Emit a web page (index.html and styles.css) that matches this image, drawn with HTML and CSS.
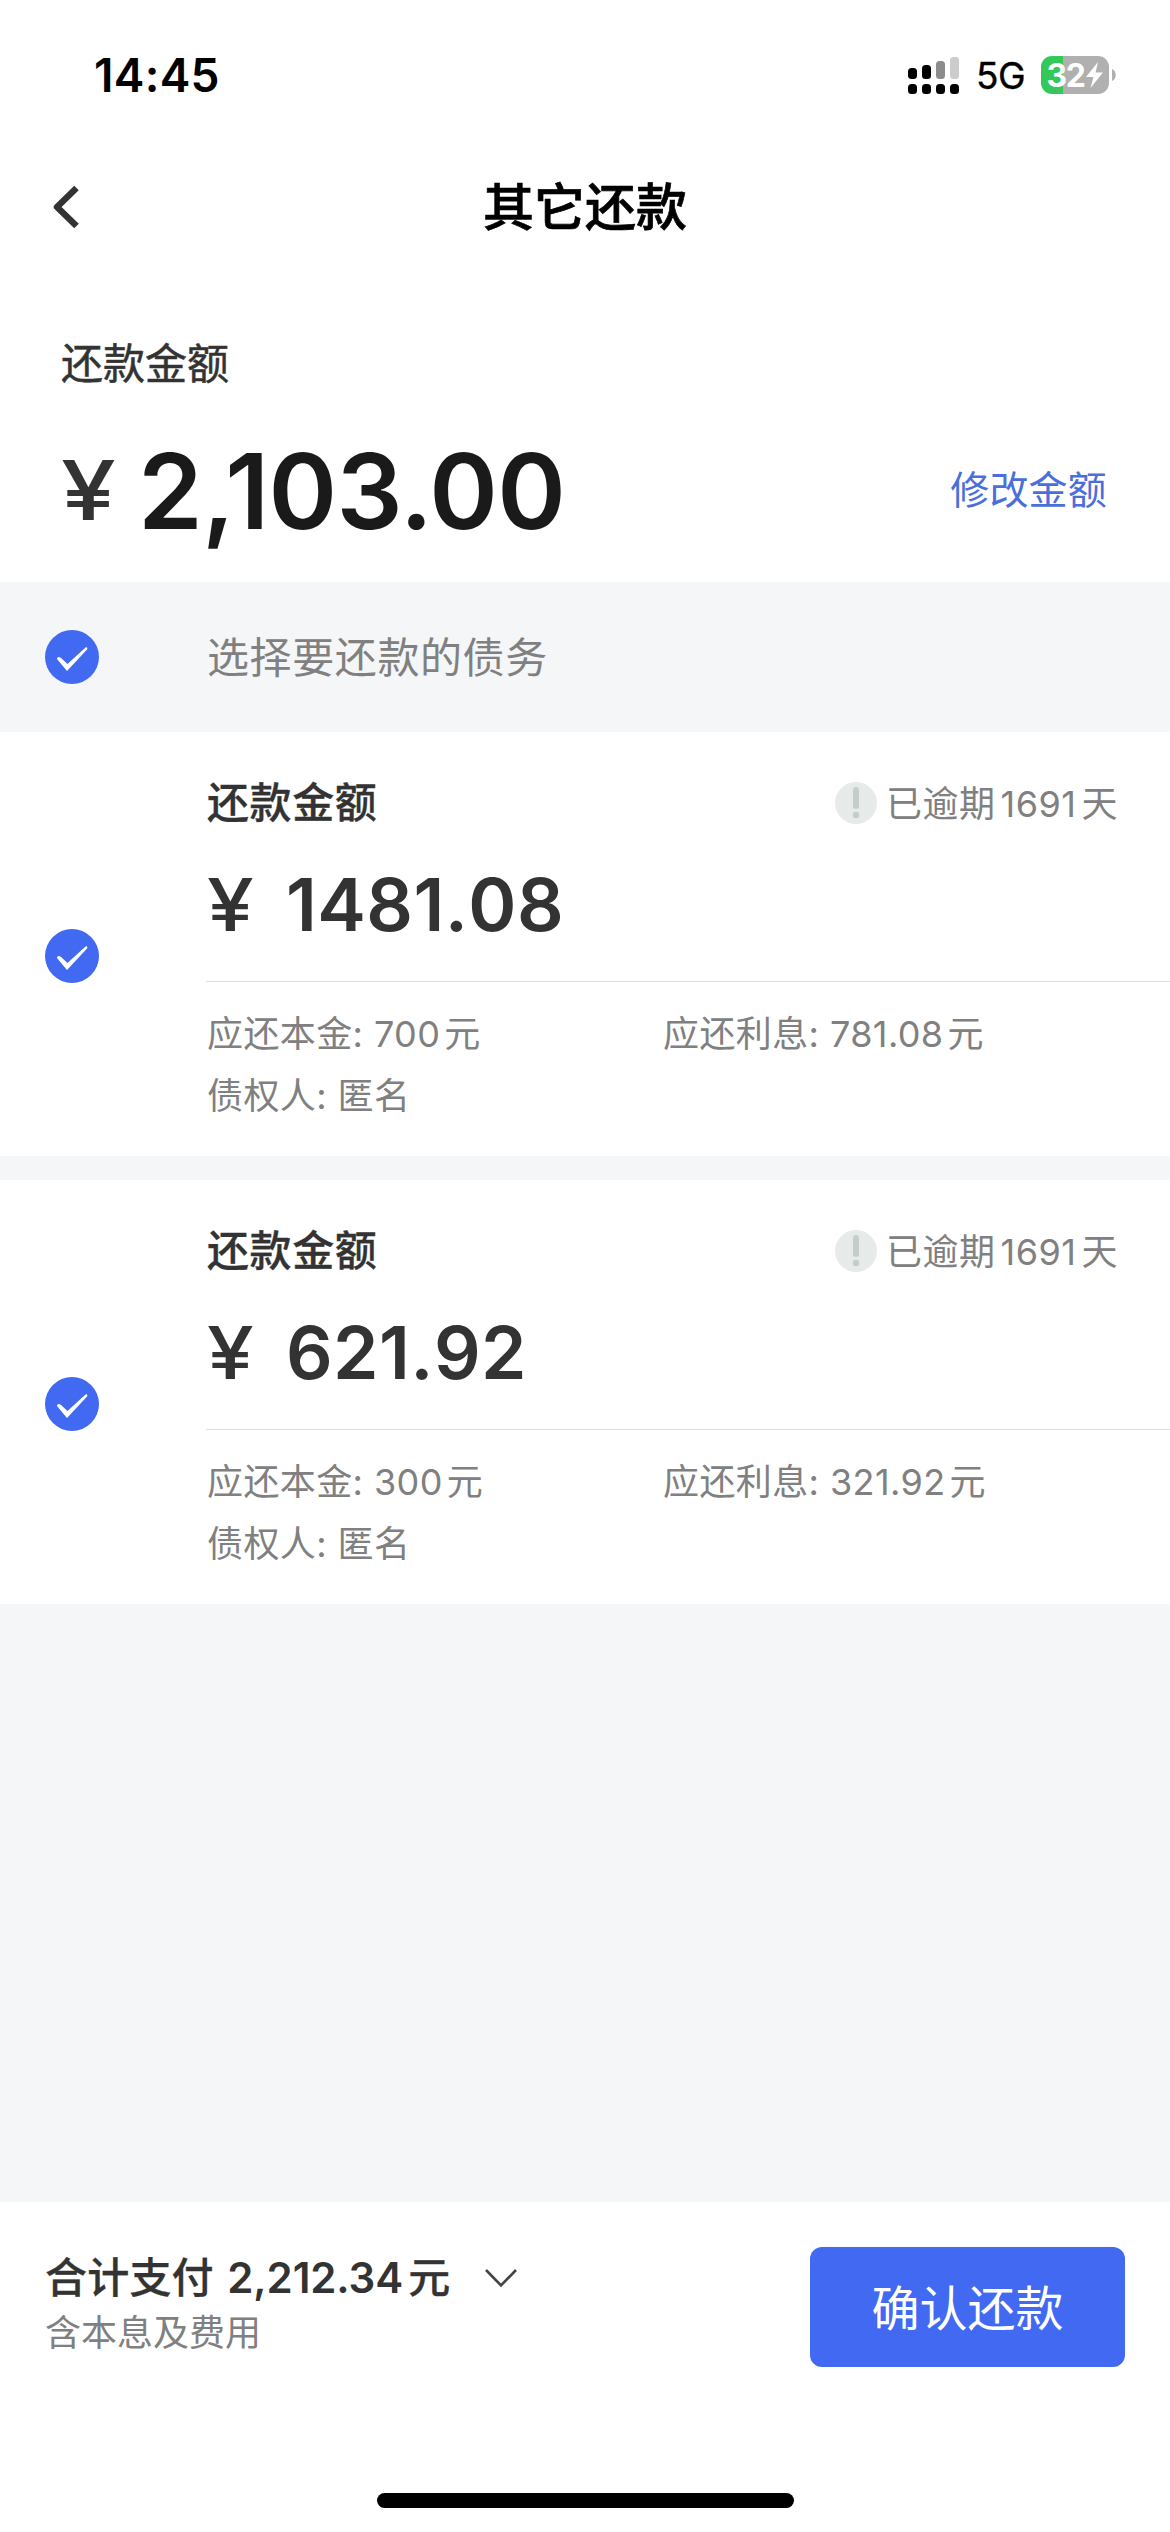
FILE: index.html
```html
<!DOCTYPE html>
<html lang="zh-CN">
<head>
    <meta charset="UTF-8">
    <meta name="viewport" content="width=device-width, initial-scale=1.0">
    <title>其它还款</title>
    <link rel="stylesheet" href="styles.css">
</head>
<body>
    <!-- Status bar -->
    <div class="status-bar">
        <div class="time">14:45</div>
        <div class="status-icons">
            <svg class="signal" width="52" height="38" viewBox="0 0 52 38">
                <rect x="0" y="12" width="9" height="11" rx="3.5"/>
                <rect x="14" y="9" width="9" height="14" rx="3.5"/>
                <rect x="28" y="5" width="9" height="18" rx="3.5" fill="#8c8c8c"/>
                <rect x="42" y="1" width="9" height="22" rx="3.5" fill="#cccccc"/>
                <rect x="0" y="28" width="9" height="10" rx="3.5"/>
                <rect x="14" y="28" width="9" height="10" rx="3.5"/>
                <rect x="28" y="28" width="9" height="10" rx="3.5"/>
                <rect x="42" y="28" width="9" height="10" rx="3.5"/>
            </svg>
            <span class="network">5G</span>
            <div class="battery">
                <span class="battery-level">32</span>
                <svg width="17" height="26" viewBox="0 0 17 26">
                    <path d="M12 0 L0 15 H7.5 L4.5 26 L17 10.5 H9.5 Z" fill="#fff"/>
                </svg>
            </div>
            <svg class="battery-tip" width="4" height="12" viewBox="0 0 4 12">
                <path d="M0 0 C5 2 5 10 0 12 Z" fill="#b0b0b0"/>
            </svg>
        </div>
    </div>

    <!-- Title bar -->
    <div class="nav-bar">
        <svg class="back-icon" width="28" height="46" viewBox="0 0 28 46">
            <path d="M24.5 4 L5 23 L24.5 42" fill="none" stroke="#333" stroke-width="6.5" stroke-linejoin="round"/>
        </svg>
        <h1>其它还款</h1>
    </div>

    <!-- Repayment amount -->
    <div class="summary">
        <div class="summary-label">还款金额</div>
        <div class="summary-row">
            <span class="summary-yen">¥</span>
            <span class="summary-amount">2,103.00</span>
            <a class="edit-link">修改金额</a>
        </div>
    </div>

    <div class="select-all">
        <svg class="check" width="54" height="54" viewBox="0 0 54 54">
            <circle cx="27" cy="27" r="27" fill="#4169f2"/>
            <path d="M12 29 C12 27 14 26 16 28 L22.5 34 L40.5 17.5 C42 16.5 43 18 42 19.5 L22 41 Z" fill="#fff"/>
        </svg>
        <span>选择要还款的债务</span>
    </div>

    <!-- Debt list -->
    <div class="debt">
        <div class="debt-check">
            <svg class="check" width="54" height="54" viewBox="0 0 54 54">
                <circle cx="27" cy="27" r="27" fill="#4169f2"/>
                <path d="M12 29 C12 27 14 26 16 28 L22.5 34 L40.5 17.5 C42 16.5 43 18 42 19.5 L22 41 Z" fill="#fff"/>
            </svg>
        </div>
        <div class="debt-body">
            <div class="debt-head">
                <span class="debt-title">还款金额</span>
                <span class="overdue">
                    <svg width="42" height="42" viewBox="0 0 42 42">
                        <circle cx="21" cy="21" r="21" fill="#e6ebea"/>
                        <path d="M21 8 V24" stroke="#c3cecc" stroke-width="6" stroke-linecap="round"/>
                        <circle cx="21" cy="33" r="3.2" fill="#c3cecc"/>
                    </svg>
                    <span class="overdue-text">已逾期<span class="days">1691</span>天</span>
                </span>
            </div>
            <div class="debt-amount"><span class="debt-yen">¥</span><span>1481.08</span></div>
            <div class="debt-detail">
                <div>应还本金: <span class="num">700</span>元</div>
                <div>应还利息: <span class="num">781.08</span>元</div>
                <div>债权人: 匿名</div>
            </div>
        </div>
    </div>

    <div class="debt">
        <div class="debt-check">
            <svg class="check" width="54" height="54" viewBox="0 0 54 54">
                <circle cx="27" cy="27" r="27" fill="#4169f2"/>
                <path d="M12 29 C12 27 14 26 16 28 L22.5 34 L40.5 17.5 C42 16.5 43 18 42 19.5 L22 41 Z" fill="#fff"/>
            </svg>
        </div>
        <div class="debt-body">
            <div class="debt-head">
                <span class="debt-title">还款金额</span>
                <span class="overdue">
                    <svg width="42" height="42" viewBox="0 0 42 42">
                        <circle cx="21" cy="21" r="21" fill="#e6ebea"/>
                        <path d="M21 8 V24" stroke="#c3cecc" stroke-width="6" stroke-linecap="round"/>
                        <circle cx="21" cy="33" r="3.2" fill="#c3cecc"/>
                    </svg>
                    <span class="overdue-text">已逾期<span class="days">1691</span>天</span>
                </span>
            </div>
            <div class="debt-amount"><span class="debt-yen">¥</span><span>621.92</span></div>
            <div class="debt-detail">
                <div>应还本金: <span class="num">300</span>元</div>
                <div>应还利息: <span class="num">321.92</span>元</div>
                <div>债权人: 匿名</div>
            </div>
        </div>
    </div>

    <!-- Footer -->
    <div class="footer">
        <div class="footer-row">
            <div class="total">
                <div class="total-line">
                    <span>合计支付 <span class="total-num">2,212.34</span>元</span>
                    <svg class="total-arrow" width="34" height="20" viewBox="0 0 34 20">
                        <path d="M2 2 L17 17.5 L32 2" fill="none" stroke="#444" stroke-width="2.6"/>
                    </svg>
                </div>
                <div class="total-note">含本息及费用</div>
            </div>
            <button class="confirm-button">确认还款</button>
        </div>
        <div class="home-indicator"></div>
    </div>
</body>
</html>
```
FILE: styles.css
```css
* {
    box-sizing: border-box;
}
body {
    margin: 0;
    width: 1170px;
    height: 2532px;
    display: flex;
    flex-direction: column;
    background-color: #f4f6f8;
    color: #333;
    font-family: Inter, "Noto Sans CJK SC", sans-serif;
    font-size: 36px;
}
svg {
    display: block;
    flex-shrink: 0;
}
.status-bar {
    display: flex;
    justify-content: space-between;
    align-items: center;
    height: 150px;
    padding: 0 54px 0 94px;
    background-color: #fff;
    color: #000;
}
.time {
    font-size: 46px;
    font-weight: 600;
    letter-spacing: 0.3px;
}
.status-icons {
    display: flex;
    align-items: center;
}
.network {
    margin-left: 16px;
    font-size: 37px;
    letter-spacing: -0.5px;
    -webkit-text-stroke: 0.4px #000;
}
.battery {
    display: flex;
    align-items: center;
    justify-content: center;
    gap: 2px;
    width: 68px;
    height: 38px;
    margin-left: 16px;
    border-radius: 11px;
    background: linear-gradient(to right, #34c759 22px, #b0b0b0 22px);
    color: #fff;
}
.battery-level {
    font-size: 32px;
    font-weight: 700;
    letter-spacing: -1.5px;
}
.battery-tip {
    margin-left: 3px;
}
.nav-bar {
    display: flex;
    align-items: center;
    height: 114px;
    padding: 0 50px 0 52px;
    background-color: #fff;
}
.back-icon {
    margin-bottom: 1px;
}
.nav-bar h1 {
    flex: 1;
    margin: 0 30px 6px 0;
    color: #000;
    font-size: 51px;
    font-weight: 500;
    text-align: center;
    -webkit-text-stroke: 0.7px #000;
}
.summary {
    height: 318px;
    padding: 69px 63px 0 61px;
    background-color: #fff;
}
.summary-label {
    font-size: 42px;
    line-height: 62px;
    -webkit-text-stroke: 0.5px #333;
}
.summary-row {
    display: flex;
    align-items: center;
    margin-top: 31px;
    line-height: 130px;
}
.summary-yen {
    width: 77px;
    font-size: 82px;
    font-weight: 500;
    transform: scaleX(1.2);
    transform-origin: left;
}
.summary-amount {
    color: #1a1a1a;
    font-size: 104px;
    font-weight: 600;
    letter-spacing: -0.7px;
}
.edit-link {
    margin: -2px 0 0 auto;
    color: #4a6fdc;
    font-size: 39px;
    letter-spacing: 0.2px;
}
.select-all {
    display: flex;
    align-items: center;
    gap: 108px;
    height: 150px;
    padding: 0 45px;
    color: #808080;
    font-size: 42px;
    letter-spacing: 0.6px;
}
.select-all span {
    margin-bottom: 5px;
}
.debt {
    display: flex;
    height: 424px;
    margin-bottom: 24px;
    background-color: #fff;
}
.debt-check {
    width: 206px;
    padding: 197px 0 0 45px;
}
.debt-body {
    flex: 1;
}
.debt-head {
    display: flex;
    justify-content: space-between;
    align-items: center;
    height: 60px;
    margin-top: 41px;
    padding: 0 52px 0 1px;
}
.debt-title {
    margin-bottom: 8px;
    font-size: 42px;
    font-weight: 500;
    letter-spacing: 0.6px;
    -webkit-text-stroke: 0.3px #333;
}
.overdue {
    display: flex;
    align-items: center;
    gap: 9px;
    color: #808080;
}
.overdue-text {
    margin-bottom: 5px;
    letter-spacing: 0.5px;
}
.days {
    margin: 0 5px;
}
.debt-amount {
    display: flex;
    height: 149px;
    padding: 27px 0 0 1px;
    border-bottom: 1px solid #dedede;
    font-size: 73px;
    font-weight: 600;
    line-height: 90px;
    letter-spacing: 0.4px;
    font-kerning: none;
}
.debt-yen {
    width: 79px;
    font-weight: 500;
    transform: scaleX(1.15);
    transform-origin: left;
}
.debt-detail {
    display: grid;
    grid-template-columns: 456px 1fr;
    padding: 21px 0 0 1px;
    color: #808080;
    line-height: 62px;
    letter-spacing: 0.4px;
}
.num {
    margin-right: 4px;
}
.footer {
    height: 330px;
    margin-top: auto;
    padding: 45px 45px 0;
    background-color: #fff;
}
.footer-row {
    display: flex;
    justify-content: space-between;
}
.total-line {
    display: flex;
    align-items: center;
    gap: 34px;
    height: 60px;
    margin-top: -3px;
    font-size: 42px;
    font-weight: 500;
    letter-spacing: 0.2px;
    -webkit-text-stroke: 0.3px #333;
}
.total-num {
    margin: 0 5px 0 2px;
    font-weight: 600;
    letter-spacing: -0.1px;
    -webkit-text-stroke: 0;
}
.total-arrow {
    margin-top: 8px;
}
.total-note {
    padding-top: 5px;
    color: #808080;
    line-height: 48px;
}
.confirm-button {
    width: 315px;
    height: 120px;
    padding-bottom: 6px;
    border: none;
    border-radius: 12px;
    background-color: #4169f2;
    color: #fff;
    font-family: inherit;
    font-size: 48px;
}
.home-indicator {
    width: 417px;
    height: 15px;
    margin: 126px auto 0;
    border-radius: 8px;
    background-color: #000;
}
```
